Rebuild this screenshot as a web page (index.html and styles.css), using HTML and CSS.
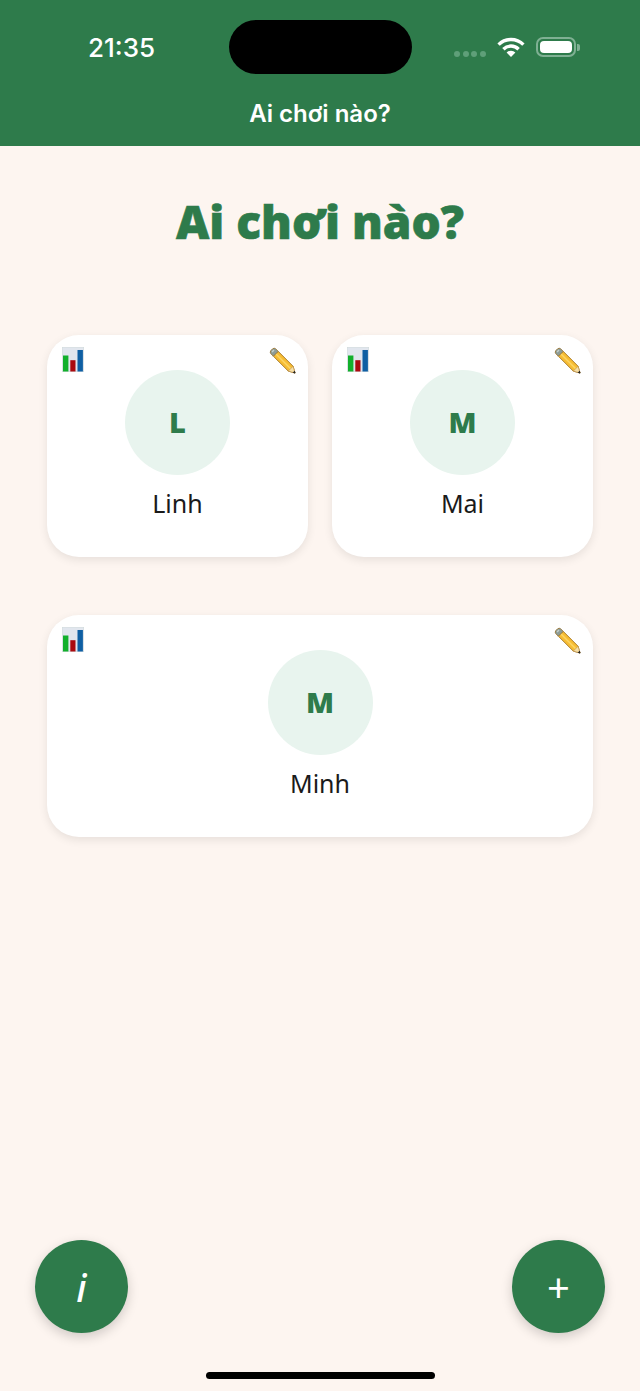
FILE: index.html
```html
<!DOCTYPE html>
<html lang="vi">
<head>
    <meta charset="UTF-8">
    <meta name="viewport" content="width=device-width, initial-scale=1.0">
    <title>Ai chơi nào?</title>
    <link rel="stylesheet" href="styles.css">
</head>
<body>

    <!-- Top bar with status icons -->
    <header class="top-bar">
        <div class="status-row">
            <span class="clock">21:35</span>
            <div class="island"></div>
            <div class="status-icons">
                <div class="signal"><i></i><i></i><i></i><i></i></div>
                <svg class="wifi" width="28" height="20" viewBox="0 0 28 20">
                    <path d="M1.6 7.6A17.6 17.6 0 0 1 26.4 7.6" fill="none" stroke="#fff" stroke-width="3.4"/>
                    <path d="M6.4 12.2A10.8 10.8 0 0 1 21.6 12.2" fill="none" stroke="#fff" stroke-width="3.4"/>
                    <path d="M14 20L9.6 15.5A6.2 6.2 0 0 1 18.4 15.5Z" fill="#fff"/>
                </svg>
                <div class="battery"><div class="battery-fill"></div></div>
                <div class="battery-tip"></div>
            </div>
        </div>
        <div class="bar-title">Ai chơi nào?</div>
    </header>

    <main class="content">
        <h1>Ai chơi nào?</h1>

        <div class="players">
            <div class="card">
                <svg class="icon-stats" viewBox="0 0 22 25"><use href="#stats"/></svg>
                <svg class="icon-edit" viewBox="0 0 28 28"><use href="#pencil"/></svg>
                <div class="avatar">L</div>
                <div class="name">Linh</div>
            </div>
            <div class="card">
                <svg class="icon-stats" viewBox="0 0 22 25"><use href="#stats"/></svg>
                <svg class="icon-edit" viewBox="0 0 28 28"><use href="#pencil"/></svg>
                <div class="avatar">M</div>
                <div class="name">Mai</div>
            </div>
            <div class="card card-wide">
                <svg class="icon-stats" viewBox="0 0 22 25"><use href="#stats"/></svg>
                <svg class="icon-edit" viewBox="0 0 28 28"><use href="#pencil"/></svg>
                <div class="avatar">M</div>
                <div class="name">Minh</div>
            </div>
        </div>
    </main>

    <!-- Round buttons at the bottom -->
    <footer class="bottom-bar">
        <button class="fab fab-info">i</button>
        <button class="fab fab-add">+</button>
    </footer>
    <div class="home-indicator"></div>

    <!-- Shared emoji style icons -->
    <svg class="defs" width="0" height="0">
        <symbol id="stats" viewBox="0 0 22 25">
            <rect x="0" y="0" width="22" height="25" fill="#e1e6ee" stroke="#c9d6cf" stroke-width="0.6"/>
            <rect x="1" y="8.5" width="5.4" height="16" fill="#12b02c"/>
            <rect x="8.3" y="13.2" width="5.2" height="11.3" fill="#ab0a0f"/>
            <rect x="15.5" y="3" width="5.4" height="21.5" fill="#0f5fa3"/>
        </symbol>
        <symbol id="pencil" viewBox="0 0 28 28">
            <path d="M9.5 4.5L4.5 9.5L20 25L27 27L25 20Z" fill="#f7bd33" stroke="#a87a28" stroke-width="1" stroke-linejoin="round"/>
            <path d="M7 7L22.5 22.5" stroke="#fbd566" stroke-width="1.6"/>
            <path d="M20 25L27 27L25 20Z" fill="#f6dfa8" stroke="#b98f48" stroke-width="0.6"/>
            <path d="M25.2 26.4L27 27L26.4 25.2Z" fill="#222" stroke="#222" stroke-width="1"/>
            <path d="M4.5 9.5L1.8 6.8Q0.6 5.4 2 3.6L3.6 2Q5.4 0.6 6.8 1.8L9.5 4.5Z" fill="#8c9c98" stroke="#9a7a3c" stroke-width="1"/>
            <path d="M3.2 5.2L5.2 3.2" stroke="#c7d0cc" stroke-width="1.4"/>
        </symbol>
    </svg>

</body>
</html>
```
FILE: styles.css
```css
/* Reset */
* {
    margin: 0;
    padding: 0;
    box-sizing: border-box;
}

body {
    display: flex;
    flex-direction: column;
    width: 640px;
    height: 1391px;
    overflow: hidden;
    background: #fdf5f0;
    font-family: 'Noto Sans', sans-serif;
    color: #1a1a1a;
}

/* Top bar */
.top-bar {
    height: 146px;
    background: #2e7b4b;
    color: #fff;
    flex-shrink: 0;
}

.status-row {
    display: flex;
    align-items: center;
    height: 54px;
    margin-top: 20px;
    padding-left: 88px;
}

.clock {
    width: 141px;
    font-family: 'Inter', sans-serif;
    font-size: 26px;
    font-weight: 500;
}

.island {
    width: 183px;
    height: 54px;
    border-radius: 27px;
    background: #000;
}

.status-icons {
    display: flex;
    align-items: center;
    margin-left: 42px;
}

.signal {
    display: flex;
    gap: 2.6px;
    margin-top: 14px;
    margin-right: 11px;
}

.signal i {
    width: 6px;
    height: 6px;
    border-radius: 50%;
    background: #5f9f79;
}

.wifi {
    margin-right: 11px;
}

.battery {
    width: 40px;
    height: 20px;
    padding: 2px;
    border: 2px solid #7fb093;
    border-radius: 7px;
}

.battery-fill {
    height: 100%;
    border-radius: 4px;
    background: #fff;
}

.battery-tip {
    width: 3px;
    height: 7px;
    margin-left: 1px;
    border-radius: 0 2px 2px 0;
    background: #7fb093;
}

.bar-title {
    margin-top: 24px;
    text-align: center;
    font-family: 'Inter', sans-serif;
    font-size: 24px;
    font-weight: 600;
    height: 32px;
    line-height: 32px;
}

/* Main content */
.content {
    flex: 1;
    padding: 0 46.7px;
}

h1 {
    margin-top: 48px;
    text-align: center;
    font-family: 'Noto Sans', sans-serif;
    font-size: 46px;
    font-weight: 900;
    line-height: 54px;
    color: #2e7b4b;
    -webkit-text-stroke: 0.6px #2e7b4b;
}

.players {
    display: grid;
    grid-template-columns: 1fr 1fr;
    column-gap: 23.4px;
    row-gap: 58px;
    margin-top: 87px;
}

.card {
    position: relative;
    display: flex;
    flex-direction: column;
    align-items: center;
    height: 222px;
    padding-top: 35px;
    background: #fff;
    border-radius: 32px;
    box-shadow: 0 3px 10px rgba(0, 0, 0, 0.09);
}

.card-wide {
    grid-column: 1 / 3;
}

.icon-stats {
    position: absolute;
    top: 12px;
    left: 15px;
    width: 22px;
    height: 25px;
}

.icon-edit {
    position: absolute;
    top: 12px;
    right: 12px;
    width: 27px;
    height: 27px;
}

.avatar {
    display: flex;
    align-items: center;
    justify-content: center;
    width: 105px;
    height: 105px;
    padding-bottom: 3px;
    border-radius: 50%;
    background: #e8f4ee;
    font-size: 29px;
    font-weight: 900;
    color: #2e7b4b;
}

.name {
    margin-top: 11px;
    font-size: 25px;
    line-height: 34px;
}

/* Bottom buttons */
.bottom-bar {
    display: flex;
    justify-content: space-between;
    padding: 0 35px;
    margin-bottom: 58px;
}

.fab {
    width: 93px;
    height: 93px;
    border: none;
    border-radius: 50%;
    background: #2e7b4b;
    color: #fff;
    box-shadow: 0 4px 12px rgba(0, 0, 0, 0.18);
    font-family: 'Noto Sans', sans-serif;
}

.fab-info {
    font-size: 38px;
    font-style: italic;
    font-weight: 500;
}

.fab-add {
    font-size: 40px;
    font-weight: 400;
}

.home-indicator {
    position: absolute;
    left: 206px;
    top: 1372px;
    width: 229px;
    height: 7px;
    border-radius: 4px;
    background: #000;
}

.defs {
    position: absolute;
}
```
